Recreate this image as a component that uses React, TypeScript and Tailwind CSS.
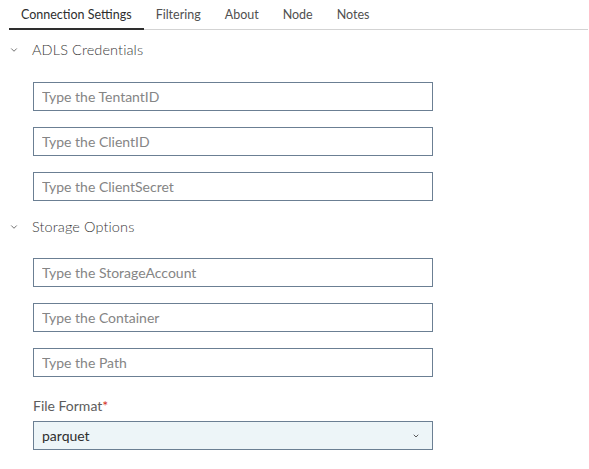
import { ChevronDown } from "lucide-react";

const tabs = ["Connection Settings", "Filtering", "About", "Node", "Notes"];

// SECTION HEADER

function SectionHeader({ title }: { title: string }) {
  return (
    <div className="flex h-[20px] items-center">
      <ChevronDown className="ml-[9px] h-[10px] w-[10px] text-[#555]" strokeWidth={2} />
      <span className="ml-[13px] text-[14.5px] font-light tracking-[0.1px] text-[#3a3a3a]">{title}</span>
    </div>
  );
}

// TEXT INPUT

function Field({ placeholder }: { placeholder: string }) {
  return (
    <input
      type="text"
      placeholder={placeholder}
      className="h-[29px] w-[400px] border border-[#6b7f93] bg-white px-[8px] text-[14px] text-[#333] outline-none placeholder:text-[#858585]"
    />
  );
}

export default function App() {
  return (
    <div className="min-h-screen w-full bg-white font-['Lato',sans-serif]">
      {/* TABS */}

      <div className="ml-[9px] mr-px flex border-b border-[#d3d3d3]">
        {tabs.map((tab, i) => (
          <div
            key={tab}
            className={
              i === 0
                ? "-mb-px flex h-[30px] items-center border-b-2 border-[#2e2e2e] px-3 pt-[3px] text-[12.5px] text-[#2e2e2e]"
                : "-mb-px flex h-[30px] items-center border-b-2 border-transparent px-3 pt-[3px] text-[12.5px] text-[#505050]"
            }
          >
            {tab}
          </div>
        ))}
      </div>

      {/* ADLS CREDENTIALS */}

      <div className="mt-[10px]">
        <SectionHeader title="ADLS Credentials" />
        <div className="mt-[22px] flex flex-col gap-4 pl-[33px]">
          <Field placeholder="Type the TentantID" />
          <Field placeholder="Type the ClientID" />
          <Field placeholder="Type the ClientSecret" />
        </div>
      </div>

      {/* STORAGE OPTIONS */}

      <div className="mt-4">
        <SectionHeader title="Storage Options" />
        <div className="mt-[21px] flex flex-col gap-4 pl-[33px]">
          <Field placeholder="Type the StorageAccount" />
          <Field placeholder="Type the Container" />
          <Field placeholder="Type the Path" />

          {/* FILE FORMAT */}

          <div className="mt-[4px] flex flex-col">
            <label className="h-[18px] text-[14px] leading-[18px] text-[#5c5c5c]">
              File Format<span className="text-[#d4321c]">*</span>
            </label>
            <div className="relative mt-[6px] w-[400px]">
              <select
                defaultValue="parquet"
                className="h-[29px] w-full appearance-none border border-[#6b7f93] bg-[#edf5f8] px-[8px] text-[14px] text-[#2f2f2f] outline-none"
              >
                <option value="parquet">parquet</option>
                <option value="csv">csv</option>
                <option value="json">json</option>
              </select>
              <ChevronDown
                className="pointer-events-none absolute right-[13px] top-[11px] h-[8px] w-[8px] text-[#333]"
                strokeWidth={2.4}
              />
            </div>
          </div>
        </div>
      </div>
    </div>
  );
}
